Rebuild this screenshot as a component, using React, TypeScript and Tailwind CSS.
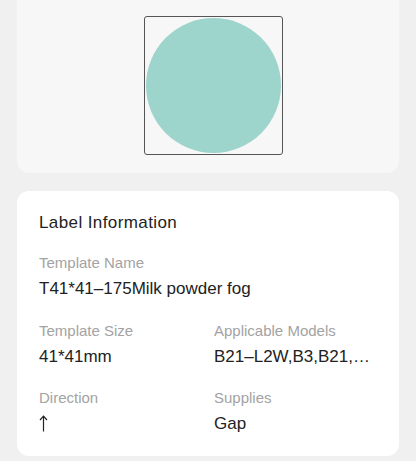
import React from 'react';

interface Field {
  label: string;
  value: React.ReactNode;
}

const UpArrow = () => (
  <svg width="9" height="17" viewBox="0 0 9 17" className="mt-[3px] block" fill="none" stroke="#222222" strokeWidth="1.2">
    <path d="M4.5 1.5V16.5" />
    <path d="M1 5L4.5 1.2L8 5" />
  </svg>
);

const rows: Field[][] = [
  [
    { label: 'Template Size', value: '41*41mm' },
    { label: 'Applicable Models', value: 'B21–L2W,B3,B21,…' },
  ],
  [
    { label: 'Direction', value: <UpArrow /> },
    { label: 'Supplies', value: 'Gap' },
  ],
];

const InfoItem: React.FC<Field> = ({ label, value }) => (
  <div className="min-w-0">
    <div className="text-[15px] leading-[20px] text-[#a3a3a3]">{label}</div>
    <div className="mt-[4px] h-[24px] truncate text-[17px] leading-[24px] text-[#222222]">{value}</div>
  </div>
);

const App: React.FC = () => {
  return (
    <div
      className="min-h-[461px] bg-[#f0f0f0] px-[17px] pb-[5px]"
      style={{ fontFamily: '"Liberation Sans", Arial, sans-serif' }}
    >
      {/* Preview */}
      <div className="flex h-[173px] items-start justify-center rounded-b-[12px] bg-[#f7f7f7] pl-[11px] pt-[16px]">
        <div className="flex h-[139px] w-[139px] items-center justify-center rounded-[3px] border border-[#555555]">
          <div className="h-[135px] w-[135px] rounded-full bg-[#9dd4cb]" />
        </div>
      </div>

      {/* Label info */}
      <div className="mt-[18px] rounded-[12px] bg-white px-[22px] pb-[20px] pt-[20px]">
        <h2 className="text-[17px] leading-[24px] tracking-[0.4px] text-[#222222]">Label Information</h2>

        <div className="mt-[18px]">
          <InfoItem label="Template Name" value="T41*41–175Milk powder fog" />
        </div>

        {rows.map((row, i) => (
          <div key={i} className={`grid grid-cols-[175px_1fr] ${i === 0 ? 'mt-[20px]' : 'mt-[19px]'}`}>
            {row.map((f) => (
              <InfoItem key={f.label} label={f.label} value={f.value} />
            ))}
          </div>
        ))}
      </div>
    </div>
  );
};

export default App;
